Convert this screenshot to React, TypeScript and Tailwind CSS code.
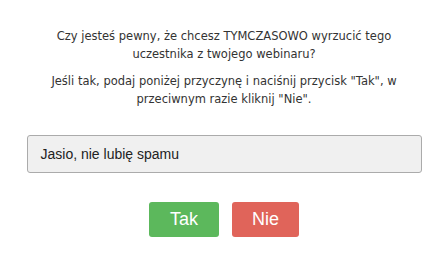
export default function App() {
  return (
    <div className="w-[448px] h-[262px] bg-white flex flex-col items-center">
      <div className="pt-[26.5px] text-center text-[#333] text-[11.5px] leading-[18px] font-['DejaVu_Sans',Verdana,sans-serif]">
        <p>Czy jesteś pewny, że chcesz TYMCZASOWO wyrzucić tego<br />uczestnika z twojego webinaru?</p>
        <p className="mt-[9px]">Jeśli tak, podaj poniżej przyczynę i naciśnij przycisk "Tak", w<br />przeciwnym razie kliknij "Nie".</p>
      </div>
      <div className="mt-[27.5px] w-[395px] h-[38px] bg-[#f0f0f0] border border-[#ababab] rounded-[3px] flex items-center pl-[13px] text-[14px] text-[#222] font-['Liberation_Sans',Arial,sans-serif]">
        Jasio, nie lubię spamu
      </div>
      <div className="mt-[29px] flex gap-[13px] font-['Liberation_Sans',Arial,sans-serif] text-white text-[18px]">
        <button className="w-[70px] h-[35px] rounded-[3px] bg-[#5cb85c] flex items-center justify-center">Tak</button>
        <button className="w-[67px] h-[35px] rounded-[3px] bg-[#e0645a] flex items-center justify-center">Nie</button>
      </div>
    </div>
  );
}
